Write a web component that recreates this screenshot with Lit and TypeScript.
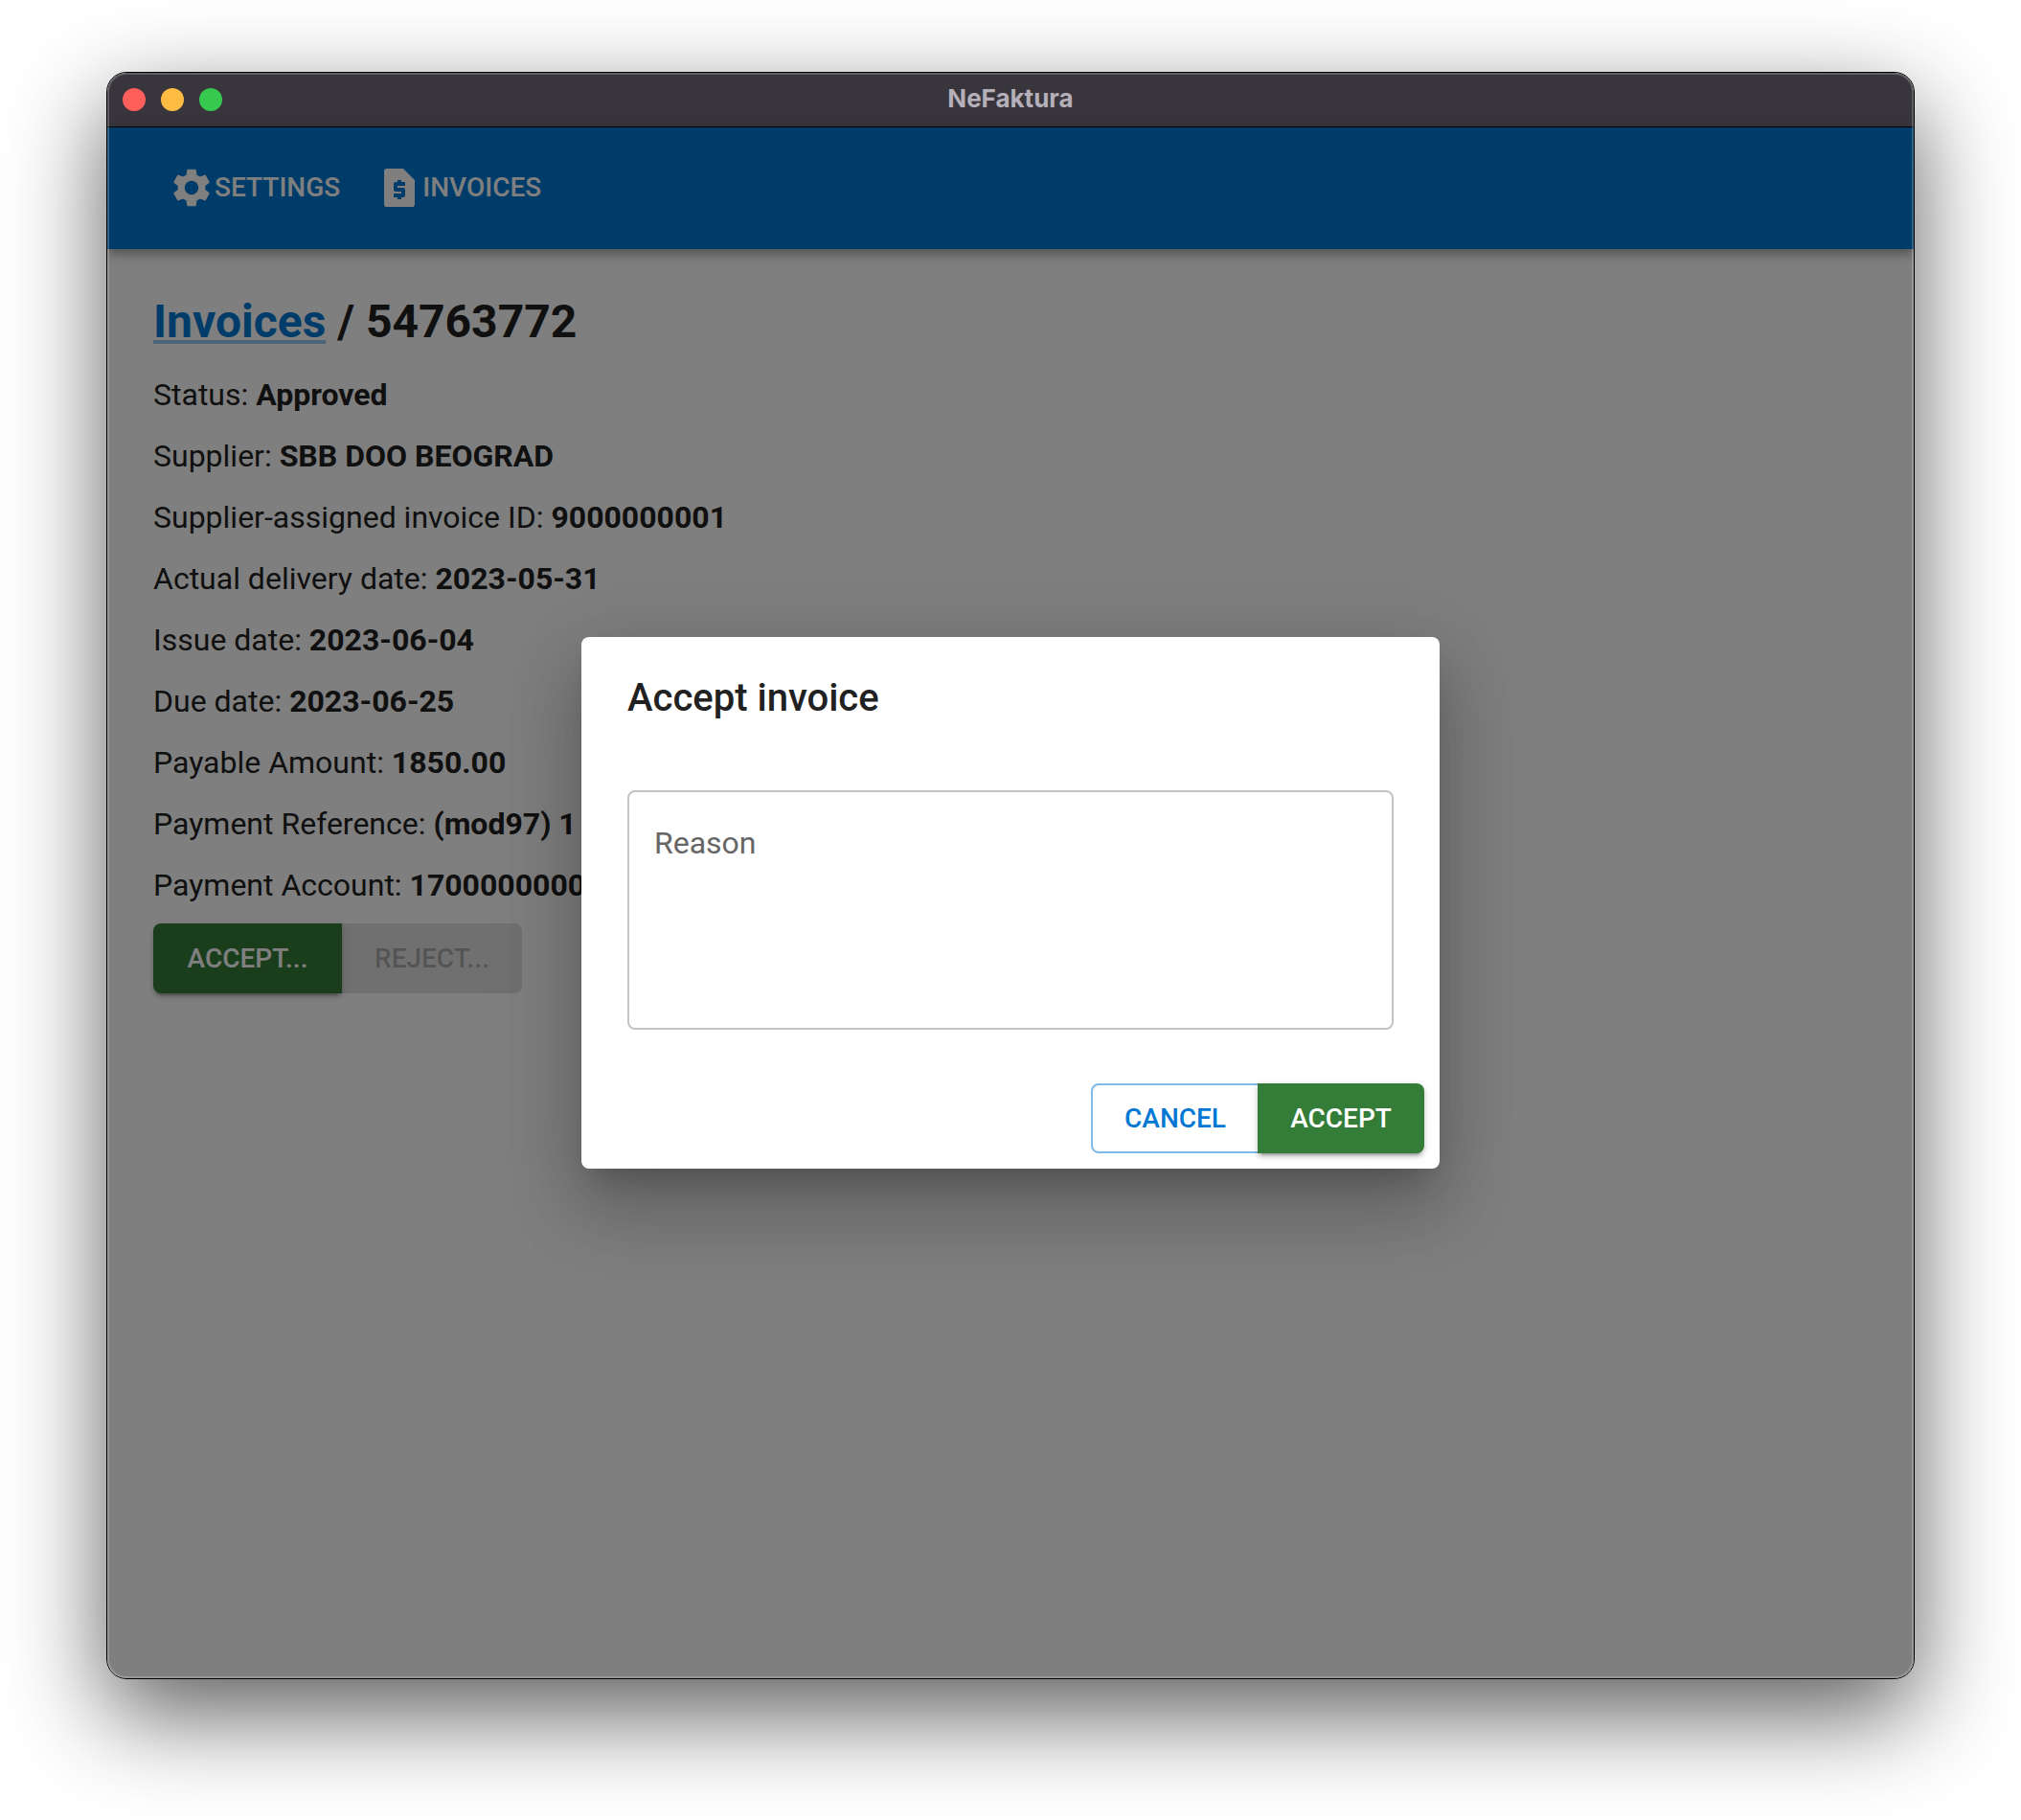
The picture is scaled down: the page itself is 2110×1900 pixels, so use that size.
import { LitElement, html, css, svg } from "lit";
import { customElement, state } from "lit/decorators.js";

const ICON_SETTINGS = svg`<path d="M19.14 12.94c.04-.3.06-.61.06-.94 0-.32-.02-.64-.07-.94l2.03-1.58c.18-.14.23-.41.12-.61l-1.92-3.32c-.12-.22-.37-.29-.59-.22l-2.39.96c-.5-.38-1.03-.7-1.62-.94l-.36-2.54c-.04-.24-.24-.41-.48-.41h-3.84c-.24 0-.43.17-.47.41l-.36 2.54c-.59.24-1.13.57-1.62.94l-2.39-.96c-.22-.08-.47 0-.59.22L2.74 8.87c-.12.21-.08.47.12.61l2.03 1.58c-.05.3-.09.63-.09.94s.02.64.07.94l-2.03 1.58c-.18.14-.23.41-.12.61l1.92 3.32c.12.22.37.29.59.22l2.39-.96c.5.38 1.03.7 1.62.94l.36 2.54c.05.24.24.41.48.41h3.84c.24 0 .44-.17.47-.41l.36-2.54c.59-.24 1.13-.56 1.62-.94l2.39.96c.22.08.47 0 .59-.22l1.92-3.32c.12-.22.07-.47-.12-.61l-2.01-1.58zM12 15.6c-1.98 0-3.6-1.62-3.6-3.6s1.62-3.6 3.6-3.6 3.6 1.62 3.6 3.6-1.62 3.6-3.6 3.6z"/>`;
const ICON_INVOICE = svg`<path d="M14 2H5.3C4.6 2 4 2.6 4 3.3v17.4c0 .7.6 1.3 1.3 1.3h13.4c.7 0 1.3-.6 1.3-1.3V8l-6-6zm1 9h-4v1h3c.55 0 1 .45 1 1v3c0 .55-.45 1-1 1h-1v1h-2v-1H9v-2h4v-1h-3c-.55 0-1-.45-1-1v-3c0-.55.45-1 1-1h1V8h2v1h2v2z"/>`;

const FIELDS: [string, string][] = [
  ["Status", "Approved"],
  ["Supplier", "SBB DOO BEOGRAD"],
  ["Supplier-assigned invoice ID", "9000000001"],
  ["Actual delivery date", "2023-05-31"],
  ["Issue date", "2023-06-04"],
  ["Due date", "2023-06-25"],
  ["Payable Amount", "1850.00"],
  ["Payment Reference", "(mod97) 1"],
  ["Payment Account", "1700000000"],
];

@customElement("app-root")
export class AppRoot extends LitElement {
  @state() private reason = "";

  static styles = css`
    :host {
      box-sizing: border-box;
      min-height: 100vh;
      padding: 75px 111px 147px;
      display: flex;
      background: #fff;
      color: #212121;
      font-family: Roboto, "Liberation Sans", sans-serif;
      font-size: 32px;
      line-height: 48px;
    }
    * { box-sizing: border-box; }
    .window {
      position: relative;
      flex: 1;
      min-width: 0;
      display: flex;
      flex-direction: column;
      border: 1px solid #000;
      border-radius: 21px;
      overflow: hidden;
      background: #fff;
    }
    .shadow {
      flex: 1;
      min-width: 0;
      display: flex;
      border-radius: 21px;
      box-shadow: 0 36px 100px rgba(0, 0, 0, 0.64);
    }
    .window::after {
      content: "";
      position: absolute;
      inset: 0;
      border: 2px solid rgba(255, 255, 255, 0.2);
      border-radius: 20px;
      pointer-events: none;
      z-index: 3;
    }
    .titlebar {
      display: grid;
      grid-template-columns: 1fr auto 1fr;
      align-items: center;
      height: 57px;
      padding: 0 16px;
      background: #39353c;
      border-bottom: 1px solid #000;
    }
    .lights { display: flex; gap: 16px; }
    .light {
      width: 24px;
      height: 24px;
      padding: 0;
      border: 0;
      border-radius: 50%;
    }
    .close { background: #ff5f5a; }
    .minimize { background: #ffbc42; }
    .zoom { background: #37c94f; }
    .title {
      margin: 0;
      padding-bottom: 2px;
      color: #b4afb8;
      font: 700 26px/32px Inter, sans-serif;
    }
    .client {
      position: relative;
      flex: 1;
      display: flex;
      flex-direction: column;
    }
    .appbar {
      display: flex;
      align-items: center;
      gap: 6px;
      height: 127px;
      padding: 0 48px 2px;
      background: #0078d4;
      color: #fff;
      box-shadow: 0 4px 8px -2px rgba(0, 0, 0, 0.2), 0 8px 10px rgba(0, 0, 0, 0.14), 0 2px 20px rgba(0, 0, 0, 0.12);
    }
    button {
      font: 500 28px/49px Roboto, "Liberation Sans", sans-serif;
      text-transform: uppercase;
    }
    .nav {
      display: flex;
      align-items: center;
      padding: 12px 16px;
      border: 0;
      background: none;
      color: inherit;
    }
    .icon { width: 48px; height: 48px; fill: currentColor; }
    .page { padding: 48px; }
    .crumbs { margin: 0 0 24px; font-size: 48px; line-height: 56px; font-weight: 700; }
    .crumbs a {
      color: #0078d4;
      text-decoration: underline;
      text-decoration-color: rgba(0, 120, 212, 0.4);
    }
    .field { margin: 0 0 16px; }
    .group { display: flex; }
    .btn {
      height: 73px;
      padding: 12px 30px;
      border: 0;
      border-radius: 8px;
      white-space: nowrap;
    }
    .btn:first-child { border-top-right-radius: 0; border-bottom-right-radius: 0; }
    .btn:last-child { border-top-left-radius: 0; border-bottom-left-radius: 0; }
    .wide { min-width: 197px; }
    .medium { min-width: 188px; }
    .narrow { min-width: 174px; }
    .success {
      position: relative;
      background: #347d38;
      color: #fff;
      box-shadow: 0 6px 2px -4px rgba(0, 0, 0, 0.2), 0 4px 4px rgba(0, 0, 0, 0.14), 0 2px 10px rgba(0, 0, 0, 0.12);
    }
    .outlined {
      padding: 10px 28px;
      border: 2px solid rgba(0, 120, 212, 0.5);
      border-right: 0;
      background: #fff;
      color: #0078d4;
    }
    .btn:disabled { background: rgba(0, 0, 0, 0.12); color: rgba(0, 0, 0, 0.26); }
    .backdrop {
      position: absolute;
      inset: 0;
      display: flex;
      align-items: center;
      justify-content: center;
      background: rgba(0, 0, 0, 0.5);
      z-index: 2;
    }
    .dialog {
      width: 100%;
      max-width: 896px;
      border-radius: 8px;
      background: #fff;
      box-shadow: 0 22px 30px -14px rgba(0, 0, 0, 0.2), 0 48px 76px 6px rgba(0, 0, 0, 0.14), 0 18px 92px 16px rgba(0, 0, 0, 0.12);
    }
    .heading { margin: 0; padding: 32px 48px; font-size: 40px; line-height: 64px; font-weight: 500; }
    .body { display: flex; padding: 32px 48px 40px; }
    .reason {
      flex: 1;
      min-width: 0;
      height: 250px;
      padding: 29px 26px;
      border: 2px solid #c4c4c4;
      border-radius: 8px;
      background: none;
      color: inherit;
      font: inherit;
      resize: none;
      outline: none;
    }
    .reason::placeholder { color: #666; opacity: 1; }
    .actions { display: flex; justify-content: flex-end; padding: 16px; }
  `;

  render() {
    return html`
      <div class="shadow">
        <div class="window">
          <header class="titlebar">
            <div class="lights">
              <button class="light close" aria-label="Close"></button>
              <button class="light minimize" aria-label="Minimize"></button>
              <button class="light zoom" aria-label="Zoom"></button>
            </div>
            <h1 class="title">NeFaktura</h1>
          </header>
          <div class="client">
            <nav class="appbar">
              <button class="nav"><svg class="icon" viewBox="0 0 24 24" aria-hidden="true">${ICON_SETTINGS}</svg>Settings</button>
              <button class="nav"><svg class="icon" viewBox="0 0 24 24" aria-hidden="true">${ICON_INVOICE}</svg>Invoices</button>
            </nav>
            <main class="page">
              <h2 class="crumbs"><a href="#invoices">Invoices</a> / 54763772</h2>
              ${FIELDS.map(([label, value]) => html`<p class="field">${label}: <strong>${value}</strong></p>`)}
              <div class="group">
                <button class="btn success wide">Accept...</button>
                <button class="btn medium" disabled>Reject...</button>
              </div>
            </main>
            <div class="backdrop">
              <section class="dialog" role="dialog" aria-modal="true" aria-labelledby="dialog-heading">
                <h2 class="heading" id="dialog-heading">Accept invoice</h2>
                <div class="body">
                  <textarea
                    class="reason"
                    aria-label="Reason"
                    placeholder="Reason"
                    .value=${this.reason}
                    @input=${(e: Event) => (this.reason = (e.target as HTMLTextAreaElement).value)}
                  ></textarea>
                </div>
                <div class="actions">
                  <button class="btn outlined narrow">Cancel</button>
                  <button class="btn success narrow">Accept</button>
                </div>
              </section>
            </div>
          </div>
        </div>
      </div>
    `;
  }
}
